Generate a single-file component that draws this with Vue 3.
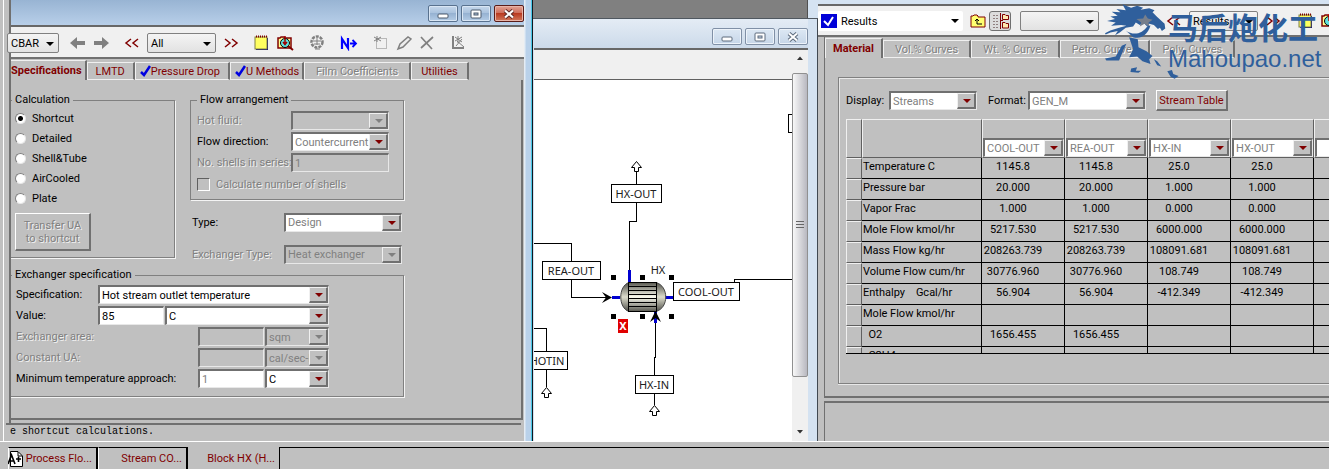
<script setup>
import { ref } from 'vue'

const mode = ref('Shortcut')
const modes = ['Shortcut', 'Detailed', 'Shell&Tube', 'AirCooled', 'Plate']

const formTabs = [
  { name: 'Specifications', kind: 'active' },
  { name: 'LMTD', kind: '' },
  { name: 'Pressure Drop', kind: 'checked' },
  { name: 'U Methods', kind: 'checked tight' },
  { name: 'Film Coefficients', kind: 'off' },
  { name: 'Utilities', kind: 'roomy' },
]
const resultTabs = [
  { name: 'Material', kind: 'active' },
  { name: 'Vol.% Curves', kind: 'off' },
  { name: 'Wt. % Curves', kind: 'off' },
  { name: 'Petro. Curves', kind: 'off' },
  { name: 'Poly. Curves', kind: 'off' },
]

const streams = ['COOL-OUT', 'REA-OUT', 'HX-IN', 'HX-OUT', '']
const rows = [
  ['Temperature C', '1145.8', '1145.8', '25.0', '25.0', ''],
  ['Pressure bar', '20.000', '20.000', '1.000', '1.000', ''],
  ['Vapor Frac', '1.000', '1.000', '0.000', '0.000', ''],
  ['Mole Flow kmol/hr', '5217.530', '5217.530', '6000.000', '6000.000', ''],
  ['Mass Flow kg/hr', '208263.739', '208263.739', '108091.681', '108091.681', ''],
  ['Volume Flow cum/hr', '30776.960', '30776.960', '108.749', '108.749', ''],
  ['Enthalpy    Gcal/hr', '56.904', '56.904', '-412.349', '-412.349', ''],
  ['Mole Flow kmol/hr', '', '', '', '', ''],
  ['  O2', '1656.455', '1656.455', '', '', ''],
  ['  C2H4', '', '', '', '', ''],
]
const handles = [[611, 275], [640, 275], [669, 275], [611, 314], [640, 314], [669, 314]]
const tubes = [286, 290, 294, 298, 302, 306]
</script>

<template>
  <div class="desktop">
    <main class="workspace">
      <section class="form-window">
        <header class="titlebar">
          <div class="winbtns">
            <button aria-label="Minimize"><svg width="12" height="10"><rect x="1" y="5" width="10" height="4" rx="1" fill="#fff" stroke="#4c5a6c" /></svg></button>
            <button aria-label="Maximize"><svg width="12" height="10"><rect x="1" y="1" width="10" height="8" rx="1" fill="#fff" stroke="#4c5a6c" /><rect x="4" y="4" width="4" height="2" fill="#a9bfd8" stroke="#4c5a6c" /></svg></button>
            <button class="close" aria-label="Close"><svg width="12" height="10"><path d="M2 1.500L10 8.500M10 1.500L2 8.500" stroke="#5c2a26" stroke-width="4" /><path d="M2 1.500L10 8.500M10 1.500L2 8.500" stroke="#fff" stroke-width="2.200" /></svg></button>
          </div>
        </header>

        <div class="toolbar form-tools">
          <span class="drop cut"><select aria-label="Unit set"><option>CBAR</option></select></span>
          <div class="tools">
            <button aria-label="Back"><svg width="16" height="16"><path d="M0 8L7 2V6H15V10H7V14Z" fill="#808080" /></svg></button>
            <button aria-label="Forward"><svg width="16" height="16"><path d="M16 8L9 2V6H1V10H9V14Z" fill="#808080" /></svg></button>
          </div>
          <div class="tools">
            <button aria-label="Previous"><svg width="16" height="16"><path d="M7 4L2 8L7 12M14 4L9 8L14 12" fill="none" stroke="#800000" stroke-width="1.500" /></svg></button>
            <span class="drop all"><select aria-label="Sheet filter"><option>All</option></select></span>
            <button aria-label="Next"><svg width="16" height="16"><path d="M2 4L7 8L2 12M9 4L14 8L9 12" fill="none" stroke="#800000" stroke-width="1.500" /></svg></button>
          </div>
          <div class="tools">
            <button aria-label="Notes"><svg width="16" height="16"><rect x="2" y="3" width="12" height="12" fill="#000080" /><rect x="1" y="2" width="12" height="12" fill="#ffff60" stroke="#808040" /><path d="M2 1.500H13" stroke="#800000" stroke-width="2" stroke-dasharray="1 1" /></svg></button>
            <button aria-label="Browse"><svg width="17" height="16"><path d="M1 13V3H3L4 2H7L8 3H14V13Z" fill="#ffff90" stroke="#800000" stroke-width="1.500" /><circle cx="8" cy="8" r="4.500" fill="#60e0e0" stroke="#000" /><path d="M8 1V8M6 7L8 9.500L10 7" fill="none" stroke="#a00000" stroke-width="1.500" /><path d="M11 11L16 15" stroke="#800000" stroke-width="2" /></svg></button>
          </div>
          <button aria-label="Options"><svg width="16" height="16"><circle cx="8" cy="7" r="5.500" fill="none" stroke="#808080" stroke-width="2.500" stroke-dasharray="3 1" /><path d="M4 6H12M8 3V10M5 9H11M6 14H11" stroke="#808080" /></svg></button>
          <button aria-label="Next input"><svg width="18" height="16"><path d="M2 14V4L8 13V3" fill="none" stroke="#00f" stroke-width="2.200" /><path d="M10 8.500H16M12.500 5L16 8.500L12.500 12" fill="none" stroke="#00f" stroke-width="1.800" /></svg></button>
          <div class="tools">
            <button aria-label="New"><svg width="16" height="16"><rect x="3.500" y="3.500" width="10" height="10" fill="none" stroke="#808080" stroke-dasharray="1 1" /><path d="M1 6L8 2M1 2L8 6M4 1V7" stroke="#808080" /></svg></button>
            <button aria-label="Edit"><svg width="16" height="16"><path d="M2 14L4 9L12 2L15 4L7 12Z" fill="#eee" stroke="#808080" stroke-width="1.500" /></svg></button>
            <button aria-label="Delete"><svg width="16" height="16"><path d="M2 2L13 14M14 2L2 13" stroke="#808080" stroke-width="1.700" /></svg></button>
          </div>
          <button aria-label="Plot"><svg width="16" height="16"><path d="M3 1V13H14" fill="none" stroke="#808080" stroke-width="2" /><path d="M5 6L12 2M5 2L12 7M8 1V8M6 11L12 4M7 6L14 12" stroke="#808080" /></svg></button>
        </div>

        <nav class="tabs form-tabs">
          <button v-for="t in formTabs" :key="t.name" class="tab" :class="t.kind" :disabled="t.kind === 'off'">
            <svg v-if="t.kind.startsWith('checked')" width="11" height="12"><path d="M1 7L4 10L10 1" fill="none" stroke="#0000e0" stroke-width="2.500" /></svg>{{ t.name }}
          </button>
        </nav>

        <div class="form-page">
          <div class="top-groups">
            <fieldset class="calc">
              <legend>Calculation</legend>
              <label v-for="m in modes" :key="m" class="radio"><input v-model="mode" type="radio" name="mode" :value="m" />{{ m }}</label>
              <button class="push transfer" disabled>Transfer UA<br />to shortcut</button>
            </fieldset>
            <div class="right-groups">
              <fieldset class="flow">
                <legend>Flow arrangement</legend>
                <div class="field"><label class="dim" for="hot">Hot fluid:</label><span class="combo grey"><select id="hot" disabled><option></option></select></span></div>
                <div class="field"><label for="dir">Flow direction:</label><span class="combo soft"><select id="dir"><option>Countercurrent</option></select></span></div>
                <div class="field"><label class="dim" for="shells">No. shells in series:</label><input id="shells" class="box grey" value="1" disabled /></div>
                <label class="check dim"><input type="checkbox" disabled />Calculate number of shells</label>
              </fieldset>
              <div class="field type"><label for="type">Type:</label><span class="combo soft"><select id="type"><option>Design</option></select></span></div>
              <div class="field type"><label class="dim" for="xtype">Exchanger Type:</label><span class="combo grey"><select id="xtype" disabled><option>Heat exchanger</option></select></span></div>
            </div>
          </div>
          <fieldset class="spec">
            <legend>Exchanger specification</legend>
            <div class="field"><label for="sp">Specification:</label><span class="combo"><select id="sp"><option>Hot stream outlet temperature</option></select></span></div>
            <div class="field"><label for="val">Value:</label><input id="val" class="box" value="85" /><span class="combo"><select aria-label="Value unit"><option>C</option></select></span></div>
            <div class="field long"><label class="dim" for="area">Exchanger area:</label><input id="area" class="box grey" disabled /><span class="combo grey"><select aria-label="Area unit" disabled><option>sqm</option></select></span></div>
            <div class="field long"><label class="dim" for="ua">Constant UA:</label><input id="ua" class="box grey" disabled /><span class="combo grey"><select aria-label="UA unit" disabled><option>cal/sec-K</option></select></span></div>
            <div class="field long"><label for="mta">Minimum temperature approach:</label><input id="mta" class="box soft" value="1" /><span class="combo"><select aria-label="Approach unit"><option>C</option></select></span></div>
          </fieldset>
        </div>
        <div class="message">e shortcut calculations.</div>
      </section>

      <section class="flowsheet">
        <div class="backdrop"><i></i></div>
        <div class="sheet-window">
          <header class="titlebar quiet">
            <div class="winbtns">
              <button aria-label="Minimize"><svg width="12" height="10"><rect x="1" y="5" width="10" height="4" rx="1" fill="#fff" stroke="#5c6a7c" /></svg></button>
              <button aria-label="Maximize"><svg width="12" height="10"><rect x="1" y="1" width="10" height="8" rx="1" fill="#fff" stroke="#5c6a7c" /><rect x="4" y="4" width="4" height="2" fill="#c8d8ea" stroke="#5c6a7c" /></svg></button>
              <button aria-label="Close"><svg width="12" height="10"><path d="M2 1.500L10 8.500M10 1.500L2 8.500" stroke="#5c6a7c" stroke-width="4" /><path d="M2 1.500L10 8.500M10 1.500L2 8.500" stroke="#fff" stroke-width="2" /></svg></button>
            </div>
          </header>
          <div class="sheet-body">
            <div class="canvas-col">
              <div class="ruler"></div>
              <svg class="canvas" role="img" aria-label="Process flowsheet">
                <defs>
                  <linearGradient id="cap" x1="0" y1="0" x2="0" y2="1"><stop offset="0" stop-color="#50504a" /><stop offset=".5" stop-color="#dcdccc" /><stop offset="1" stop-color="#50504a" /></linearGradient>
                  <linearGradient id="shell" x1="0" y1="0" x2="0" y2="1"><stop offset="0" stop-color="#585850" /><stop offset=".5" stop-color="#fcfcf0" /><stop offset="1" stop-color="#585850" /></linearGradient>
                </defs>
                <g transform="translate(-534 -80)">
                  <g fill="none" stroke="#000" shape-rendering="crispEdges">
                    <path d="M534 243.500H571.500V262M571.500 280V297.500H606M636.500 172V185M636.500 203V221.500H629.500V270M734.500 282V279.500H793M655.500 322V357L654.500 358V376M654.500 394V405M534 328.500H546.500V352M546.500 370V387M793 114.500H788.500V132.500H793" />
                    <rect x="611.500" y="184.500" width="50" height="18" fill="#fff" />
                    <rect x="542.500" y="261.500" width="58" height="18" fill="#fff" />
                    <rect x="673.500" y="282.500" width="66" height="18" fill="#fff" />
                    <rect x="635.500" y="375.500" width="38" height="18" fill="#fff" />
                    <rect x="530.500" y="351.500" width="37" height="18" fill="#fff" />
                  </g>
                  <g fill="#fff" stroke="#000">
                    <path d="M636.500 161.500L641.500 167.500H638.500V171.500H634.500V167.500H631.500Z" />
                    <path d="M546.500 387.500L551.500 393.500H548.500V397.500H544.500V393.500H541.500Z" />
                    <path d="M654.500 405.500L659.500 411.500H656.500V415.500H652.500V411.500H649.500Z" />
                  </g>
                  <path d="M629.500 270V283M612 297.500H620M665 297.500H673M655.500 312V323" stroke="#0000d0" stroke-width="3" />
                  <path d="M629 282.500C618 286 618 308 629 311.500ZM656 282.500C669 286 669 308 656 311.500Z" fill="url(#cap)" stroke="#444" />
                  <rect x="628.500" y="282.500" width="28" height="29" fill="url(#shell)" stroke="#000" />
                  <path v-for="y in tubes" :key="y" :d="`M629 ${y}.500H656`" stroke="#000" />
                  <path d="M602 292L612 297.500L602 303L606 297.500ZM650 322L655.500 311L661 322L655.500 318Z" fill="#000" />
                  <rect v-for="(h, i) in handles" :key="i" :x="h[0]" :y="h[1]" width="5" height="5" />
                  <rect x="618" y="319" width="10" height="14" fill="#e00000" />
                  <g class="stream">
                    <text x="636" y="198">HX-OUT</text>
                    <text x="571" y="275">REA-OUT</text>
                    <text x="706" y="296">COOL-OUT</text>
                    <text x="654" y="389">HX-IN</text>
                    <text x="547" y="365">HOTIN</text>
                    <text x="658" y="274">HX</text>
                    <text class="err" x="623" y="330">X</text>
                  </g>
                </g>
              </svg>
            </div>
            <div class="scrollbar">
              <svg width="16" height="18"><path d="M5 10L8 6.500L11 10Z" fill="#333" /></svg>
              <div class="thumb"><svg width="8" height="8"><path d="M0 .5H8M0 3.500H8M0 6.500H8" stroke="#666" /></svg></div>
              <div class="track"></div>
              <svg width="16" height="18"><path d="M5 7L8 10.500L11 7Z" fill="#333" /></svg>
            </div>
          </div>
        </div>
      </section>

      <section class="results">
        <div class="toolbar result-tools">
          <span class="drop plain"><svg width="16" height="14"><rect width="16" height="14" fill="#0000d8" /><path d="M3 7L7 11L12 3" fill="none" stroke="#fff" stroke-width="2" /></svg><select aria-label="Form"><option>Results</option></select></span>
          <button aria-label="Up one level"><svg width="16" height="16"><path d="M1 14V3H3L4 2H7L8 3V4H15V14Z" fill="#ffff70" stroke="#800000" /><path d="M12 11H7V6M5 8L7 6L9 8" fill="none" stroke="#000" /></svg></button>
          <button class="pressed" aria-label="Tree view"><svg width="20" height="18"><path d="M3 3.500H9M3 6.500H9M3 9.500H9M3 12.500H9M3 15.500H9" stroke="#908080" stroke-dasharray="2 1" /><path d="M10.500 1V17M10 8.500H13" stroke="#800000" /><path d="M12.500 7.500V2.500H15L16 3.500H18.500V7.500ZM12.500 16V10.500H15L16 11.500H18.500V16Z" fill="#ffe8b0" stroke="#800000" /></svg></button>
          <span class="drop blank"><select aria-label="Unit set"><option></option></select></span>
          <span class="gapper"></span>
          <div class="tools">
            <button aria-label="Previous"><svg width="16" height="16"><path d="M7 4L2 8L7 12M14 4L9 8L14 12" fill="none" stroke="#800000" stroke-width="1.500" /></svg></button>
            <span class="drop all"><select aria-label="Sheet"><option>Results</option></select></span>
            <button aria-label="Next"><svg width="16" height="16"><path d="M2 4L7 8L2 12M9 4L14 8L9 12" fill="none" stroke="#800000" stroke-width="1.500" /></svg></button>
          </div>
          <div class="tools">
            <button aria-label="Notes"><svg width="16" height="16"><rect x="2" y="3" width="12" height="12" fill="#000080" /><rect x="1" y="2" width="12" height="12" fill="#ffff60" stroke="#808040" /><path d="M2 1.500H13" stroke="#800000" stroke-width="2" stroke-dasharray="1 1" /></svg></button>
            <button aria-label="Browse"><svg width="17" height="16"><path d="M1 13V3H3L4 2H7L8 3H14V13Z" fill="#ffff90" stroke="#800000" stroke-width="1.500" /><circle cx="8" cy="8" r="4.500" fill="#60e0e0" stroke="#000" /><path d="M8 1V8" stroke="#c00000" stroke-width="1.500" /></svg></button>
          </div>
        </div>
        <div class="result-body">
          <nav class="tabs">
            <button v-for="t in resultTabs" :key="t.name" class="tab" :class="t.kind" :disabled="t.kind === 'off'">{{ t.name }}</button>
          </nav>
          <div class="result-page">
            <div class="result-group">
              <div class="filters">
                <label for="disp">Display:</label><span class="combo soft disp"><select id="disp"><option>Streams</option></select></span>
                <label for="fmt">Format:</label><span class="combo soft fmt"><select id="fmt"><option>GEN_M</option></select></span>
                <button class="push red">Stream Table</button>
              </div>
              <div class="grid-clip">
                <table>
                  <colgroup><col class="c-head" /><col class="c-name" /><col v-for="(s, i) in streams" :key="i" class="c-val" /></colgroup>
                  <thead>
                    <tr>
                      <th></th><th></th>
                      <th v-for="(s, i) in streams" :key="i"><span class="combo soft"><select :aria-label="`Stream ${i + 1}`"><option>{{ s }}</option></select></span></th>
                    </tr>
                  </thead>
                  <tbody>
                    <tr v-for="(r, i) in rows" :key="i">
                      <th></th>
                      <td v-for="(c, j) in r" :key="j" :class="{ name: j === 0 }">{{ c }}</td>
                    </tr>
                  </tbody>
                </table>
              </div>
            </div>
          </div>
          <div class="result-message"></div>
        </div>
        <div class="watermark">
          <svg width="75" height="77" viewBox="288 10 224 230" fill="#2f5f9c">
            <path d="M288 100L304 92L330 84L352 78L336 76L306 78L320 68L294 64L318 58L304 50L326 48L308 36L334 38L322 28L350 32L340 14L366 24L384 18L402 24L394 30L420 26L436 32L430 38L444 52L466 72L468 86L458 94L452 84L446 88L434 76L420 72L414 80L404 70L392 76L380 68L372 80L350 84L332 98L318 106L326 94L304 98L290 104Z" />
            <path d="M382 58L402 56L408 44L416 56L430 60L418 68L420 80L406 72L392 80L396 68Z" fill="#777f8c" />
            <path d="M350 92C372 108 398 104 416 78L424 77C414 108 394 118 372 112ZM360 112L386 118L388 142L412 154L430 168L420 178L424 192L400 184L384 170L360 172L372 148ZM288 176L320 170L338 138L352 132L344 148L330 182L292 182Z" />
            <path d="M366 206L384 202L380 212L396 212L388 218L364 216ZM434 178L444 184L456 200L444 196ZM474 214L488 210L492 222L508 228L496 236L484 230Z" />
          </svg>
          <div class="brand"><b>马后炮化工</b><span>Mahoupao.net</span></div>
        </div>
      </section>
    </main>

    <footer class="sheetbar">
      <button class="first"><svg width="15" height="16"><path d="M2.500 .5H10L14.500 5V15.500H2.500Z" fill="#fff" stroke="#000" /><path d="M10 1V5H14" fill="none" stroke="#000" /><path d="M0 13L3.500 4L7 13M1.500 10H6M8 8H13M10.500 5.500V11" fill="none" stroke="#000" stroke-width="1.600" /></svg>Process Flo...</button>
      <button>Stream CO...</button>
      <button class="current">Block HX (H...</button>
      <div class="rest"></div>
    </footer>
  </div>
</template>

<style>
html, body { margin: 0; background: #c0c0c0; }
</style>

<style scoped>
* { box-sizing: border-box; }
.desktop {
  height: 100vh; display: flex; flex-direction: column; overflow: hidden;
  background: #c0c0c0; color: #000;
  font: 11px/15px Roboto, "Liberation Sans", sans-serif;
}
button, input, select { font: inherit; color: inherit; margin: 0; }
button { padding: 0; border: 0; background: none; white-space: nowrap; }
svg { display: block; flex: none; }
.workspace {
  flex: 1; min-height: 0; display: grid;
  grid-template-columns: minmax(0, 533fr) minmax(0, 285fr) minmax(0, 511fr);
  grid-template-rows: minmax(0, 1fr);
}

/* exchanger form window */
.form-window {
  position: relative; display: flex; flex-direction: column; overflow: hidden;
  margin-left: 3px; padding: 0 9px 0 7px; border-left: 1px solid #fff;
  background: linear-gradient(90deg, #c0c0c0 5px, #707070 5px, #707070 7px, #c0c0c0 7px);
}
.form-window::after {
  content: ""; position: absolute; inset: 0 0 0 auto; width: 9px;
  background: linear-gradient(90deg, #e4ecf4 1px, #b9d1ea 2px, #b9d1ea 7px, #48c8e8 7px, #48c8e8 8px, #101820 8px);
}
.titlebar { height: 27px; flex: none; display: flex; justify-content: flex-end; background: linear-gradient(#98b4d3, #b8cfe9); border-bottom: 2px solid #686868; }
.winbtns { position: relative; z-index: 1; display: flex; gap: 3px; padding-top: 5px; }
.winbtns button { width: 30px; height: 17px; display: grid; place-items: center; border: 1px solid #59728f; border-radius: 2px; background: linear-gradient(#c6d8ec, #a7c0dc 50%, #96b2d2 50%, #b4cce6); box-shadow: inset 0 0 0 1px #d9e6f4; }
.winbtns .close { border-color: #5a1c18; background: linear-gradient(#e2a395, #cd6a56 50%, #b93a20 50%, #d2795c); box-shadow: inset 0 0 0 1px #e8b4a8; }
.toolbar { display: flex; align-items: center; flex: none; background: #f0f0f0; border-bottom: 2px solid #707070; }
.form-tools { height: 32px; gap: 15px; padding-top: 2px; }
.tools { display: flex; align-items: center; gap: 7px; flex: none; }
.drop { position: relative; display: flex; flex: none; height: 20px; border: 1px solid #808080; border-radius: 2px; background: linear-gradient(#f4f4f4, #e2e2e2); }
.drop select { appearance: none; width: 100%; border: 0; background: none; padding: 0 16px 0 3px; }
.drop::after { content: ""; position: absolute; right: 4px; top: 8px; border: 4px solid transparent; border-top-color: #000; border-bottom: 0; }
.cut { width: 52px; margin-left: -4px; margin-right: -4px; }
.all { width: 69px; }

.tabs { display: flex; flex: none; height: 21px; align-items: flex-end; background: #c0c0c0; }
.tab { display: flex; align-items: center; flex: none; height: 18px; padding: 0 8px; color: #800000; white-space: nowrap; border-top: 1px solid #f0f0f0; border-left: 1px solid #f0f0f0; border-right: 2px solid #707070; border-bottom: 1px solid #f0f0f0; }
.tab.active { height: 20px; padding: 0 3px 0 5px; font-weight: bold; border-bottom: 0; }
.tab.checked { padding: 0 8px 0 4px; }
.tab.tight { padding-right: 3px; }
.tab.roomy { padding: 0 9px; }
.tab.off { padding: 0 11px; color: #808080; text-shadow: 1px 1px #fff; }
.form-tabs { overflow: hidden; }
.form-tabs .active { margin-left: -6px; }

.form-page { flex: 1; min-height: 0; overflow: hidden; padding: 14px 0 0; margin-right: 1px; background: #c0c0c0; border-right: 2px solid #707070; border-bottom: 2px solid #707070; }
.top-groups { display: flex; gap: 15px; }
fieldset { margin: 0; min-width: 0; border: 1px solid #808080; box-shadow: 1px 1px #f4f4f4; padding: 0; }
legend { padding: 0 3px; margin-left: 3px; height: 12px; line-height: 12px; background: #c0c0c0; }
.calc { width: 167px; margin-left: -3px; height: 164px; padding: 2px 8px 0 6px; }
.calc legend { margin-left: -3px; }
.radio { display: flex; align-items: center; gap: 6px; height: 20px; }
.radio input { appearance: none; width: 11px; height: 11px; border-radius: 50%; background: #fff; border: 1px solid #808080; border-right-color: #e8e8e8; border-bottom-color: #e8e8e8; }
.radio input:checked { background: radial-gradient(#000 0 2px, #fff 3px); }
.push { border: 1px solid #fff; border-right: 2px solid #707070; border-bottom: 2px solid #707070; background: #c0c0c0; text-align: center; }
.push:disabled, .dim { color: #808080; text-shadow: 1px 1px #f0f0f0; }
.transfer { display: block; width: 76px; height: 38px; margin-top: 5px; line-height: 13px; }
.right-groups { width: 214px; }
.flow { padding: 5px 14px 5px 6px; }
.flow legend { margin-left: 0; }
.field { display: flex; align-items: center; height: 19px; margin-bottom: 2px; white-space: nowrap; }
.field label { flex: none; width: 94px; }
.check { display: flex; align-items: center; gap: 6px; height: 20px; }
.check input { appearance: none; width: 13px; height: 13px; border: 1px solid #606060; border-right-color: #fff; border-bottom-color: #fff; }
.field.type { height: 20px; margin: 12px 2px 0; }
.field.type label { width: 92px; }
.combo { position: relative; flex: 1; display: flex; height: 19px; min-width: 0; background: #fff; border: 2px solid #707070; border-right: 1px solid #e8e8e8; border-bottom: 1px solid #e8e8e8; }
.combo select { appearance: none; width: 100%; min-width: 0; border: 0; border-radius: 0; padding: 0 16px 0 2px; background: none; opacity: 1; }
.combo::before { content: ""; position: absolute; right: 0; top: 0; bottom: 0; width: 16px; background: #c0c0c0; border: 1px solid #f0f0f0; border-right: 2px solid #707070; border-bottom: 2px solid #707070; pointer-events: none; }
.combo::after { content: ""; position: absolute; right: 5px; top: 6px; border: 4px solid transparent; border-top-color: #800000; border-bottom: 0; pointer-events: none; }
.grey, .grey select { background: #c0c0c0; color: #808080; }
.combo.grey::after { border-top-color: #808080; }
.soft, .soft select { color: #808080; }
.box { width: 66px; height: 19px; padding: 0 2px; background: #fff; border: 2px solid #707070; border-right: 1px solid #e8e8e8; border-bottom: 1px solid #e8e8e8; border-radius: 0; margin-right: 1px; }
.box.grey { background: #c0c0c0; }
.flow .box { flex: 1; min-width: 0; margin: 0; }
.spec { width: 396px; margin: 5px 0 0 -3px; padding: 4px 74px 6px 7px; }
.spec legend { margin-left: -4px; }
.spec .field label { width: 82px; }
.spec .long label { width: 182px; }
.message { height: 18px; flex: none; margin: 3px 3px 0 -5px; padding-left: 4px; border-top: 2px solid #707070; font: 10px/13px "Liberation Mono", monospace; background: #c0c0c0; }

/* flowsheet window */
.flowsheet { display: flex; flex-direction: column; min-width: 0; }
.backdrop { height: 19px; flex: none; display: flex; justify-content: flex-end; background: #808080; border-bottom: 1px solid #505860; }
.backdrop i { width: 11px; background: #d5e3f2; border-left: 1px solid #505050; }
.sheet-window { flex: 1; min-height: 0; display: flex; flex-direction: column; padding: 0 9px 0 1px; background: #d4e2f1; border-right: 1px solid #404850; }
.titlebar.quiet { height: 31px; background: linear-gradient(#e4ecf5, #ccdaea); }
.quiet .winbtns { padding-top: 9px; }
.quiet .winbtns button { border-color: #8090a6; background: linear-gradient(#dde8f4, #c6d6e8); box-shadow: inset 0 0 0 1px #edf3fa; }
.sheet-body { flex: 1; min-height: 0; display: flex; }
.canvas-col { flex: 1; min-width: 0; display: flex; flex-direction: column; background: #fff; }
.ruler { height: 30px; flex: none; background: #f0f0f0; border-bottom: 1px solid #606060; }
.canvas { flex: 1; width: 100%; min-height: 0; overflow: hidden; }
.stream { font: 11px "Noto Sans", sans-serif; fill: #202020; text-anchor: middle; }
.stream .err { fill: #fff; font-weight: bold; }
.scrollbar { width: 16px; flex: none; display: flex; flex-direction: column; background: #f0f0f0; }
.thumb { flex: 300; margin-top: 5px; display: grid; place-items: center; border: 1px solid #909090; border-radius: 2px; background: linear-gradient(90deg, #f8f8f8, #d8d8dc 50%, #b8b8c0); }
.track { flex: 46; }

/* results window */
.results { position: relative; display: flex; flex-direction: column; min-width: 0; overflow: hidden; border-top: 4px solid #d5e3f2; }
.result-tools { height: 33px; gap: 8px; border-top: 2px solid #686868; padding-top: 1px; white-space: nowrap; }
.plain { width: 145px; align-items: center; border: 0; background: #fff; padding-left: 3px; margin-right: -1px; }
.plain select { padding-left: 4px; }
.pressed { margin: 0 1px 0 -5px; border: 1px solid #707070; border-radius: 3px; background: #dcdcdc; }
.blank { width: 79px; }
.gapper { width: 51px; flex: none; }
.results .tools + .tools { margin-left: 9px; }
.result-body { flex: 1; min-height: 0; display: flex; flex-direction: column; margin-left: 1px; border-left: 5px solid #c0c0c0; }
.result-body .tabs, .result-page { border-left: 1px solid #707070; }
.result-body .tab.active { padding: 0 7px; }
.result-page { flex: 1; min-height: 0; display: flex; padding: 19px 0 12px 13px; border-bottom: 2px solid #707070; }
.result-group { flex: 1; min-width: 0; display: flex; flex-direction: column; padding: 12px 0 29px 7px; border: 1px solid #808080; border-right: 0; box-shadow: inset 1px 1px #e8e8e8, 0 1px #e8e8e8; }
.filters { display: flex; align-items: center; flex: none; height: 21px; margin-bottom: 8px; }
.filters .combo { flex: none; }
.filters label { width: 43px; }
.disp { width: 88px; margin-right: 11px; }
.fmt { width: 118px; margin-right: 10px; }
.filters .fmt { margin-left: -3px; }
.red { width: 72px; height: 21px; color: #800000; }
.grid-clip { flex: 1; min-height: 0; overflow: hidden; border-bottom: 1px solid #000; }
table { table-layout: fixed; width: 551px; border-collapse: separate; border-spacing: 0; }
.c-head { width: 16px; }
.c-name { width: 120px; }
.c-val { width: 83px; }
th, td { padding: 0; font-weight: normal; }
th { border-top: 1px solid #f0f0f0; border-left: 1px solid #f0f0f0; border-right: 1px solid #606060; border-bottom: 1px solid #606060; }
thead th { height: 39px; vertical-align: bottom; text-align: left; }
tbody tr { height: 21px; }
td { height: 21px; padding: 0 20px 4px 0; line-height: 15px; text-align: center; border-right: 1px solid #000; border-bottom: 1px solid #000; white-space: pre; }
td.name { text-align: left; padding: 0 0 4px 1px; }
.result-message { height: 40px; flex: none; margin-top: 3px; border-top: 2px solid #707070; border-left: 1px solid #707070; }
.watermark { position: absolute; left: 287px; top: -1px; display: flex; color: #2f5f9c; pointer-events: none; }
.brand { display: flex; flex-direction: column; margin: 5px 0 0 -12px; }
.brand b { font: bold 30px/36px "Noto Sans CJK SC", sans-serif; }
.brand span { font: 24px/30px "Liberation Sans", sans-serif; }

/* window switcher */
.sheetbar { height: 28px; flex: none; display: flex; padding-left: 8px; border-top: 1px solid #fff; color: #800000; }
.sheetbar button { width: 90px; margin-top: 5px; padding-right: 4px; display: flex; align-items: center; justify-content: flex-end; gap: 3px; border-top: 1px solid #000; border-right: 2px solid #000; border-left: 1px solid #fff; }
.sheetbar .current { width: 92px; border-top: 0; border-left: 0; padding-top: 1px; border-right: 1px solid #000; }
.rest { flex: 1; margin-top: 5px; border-top: 1px solid #000; }
</style>
